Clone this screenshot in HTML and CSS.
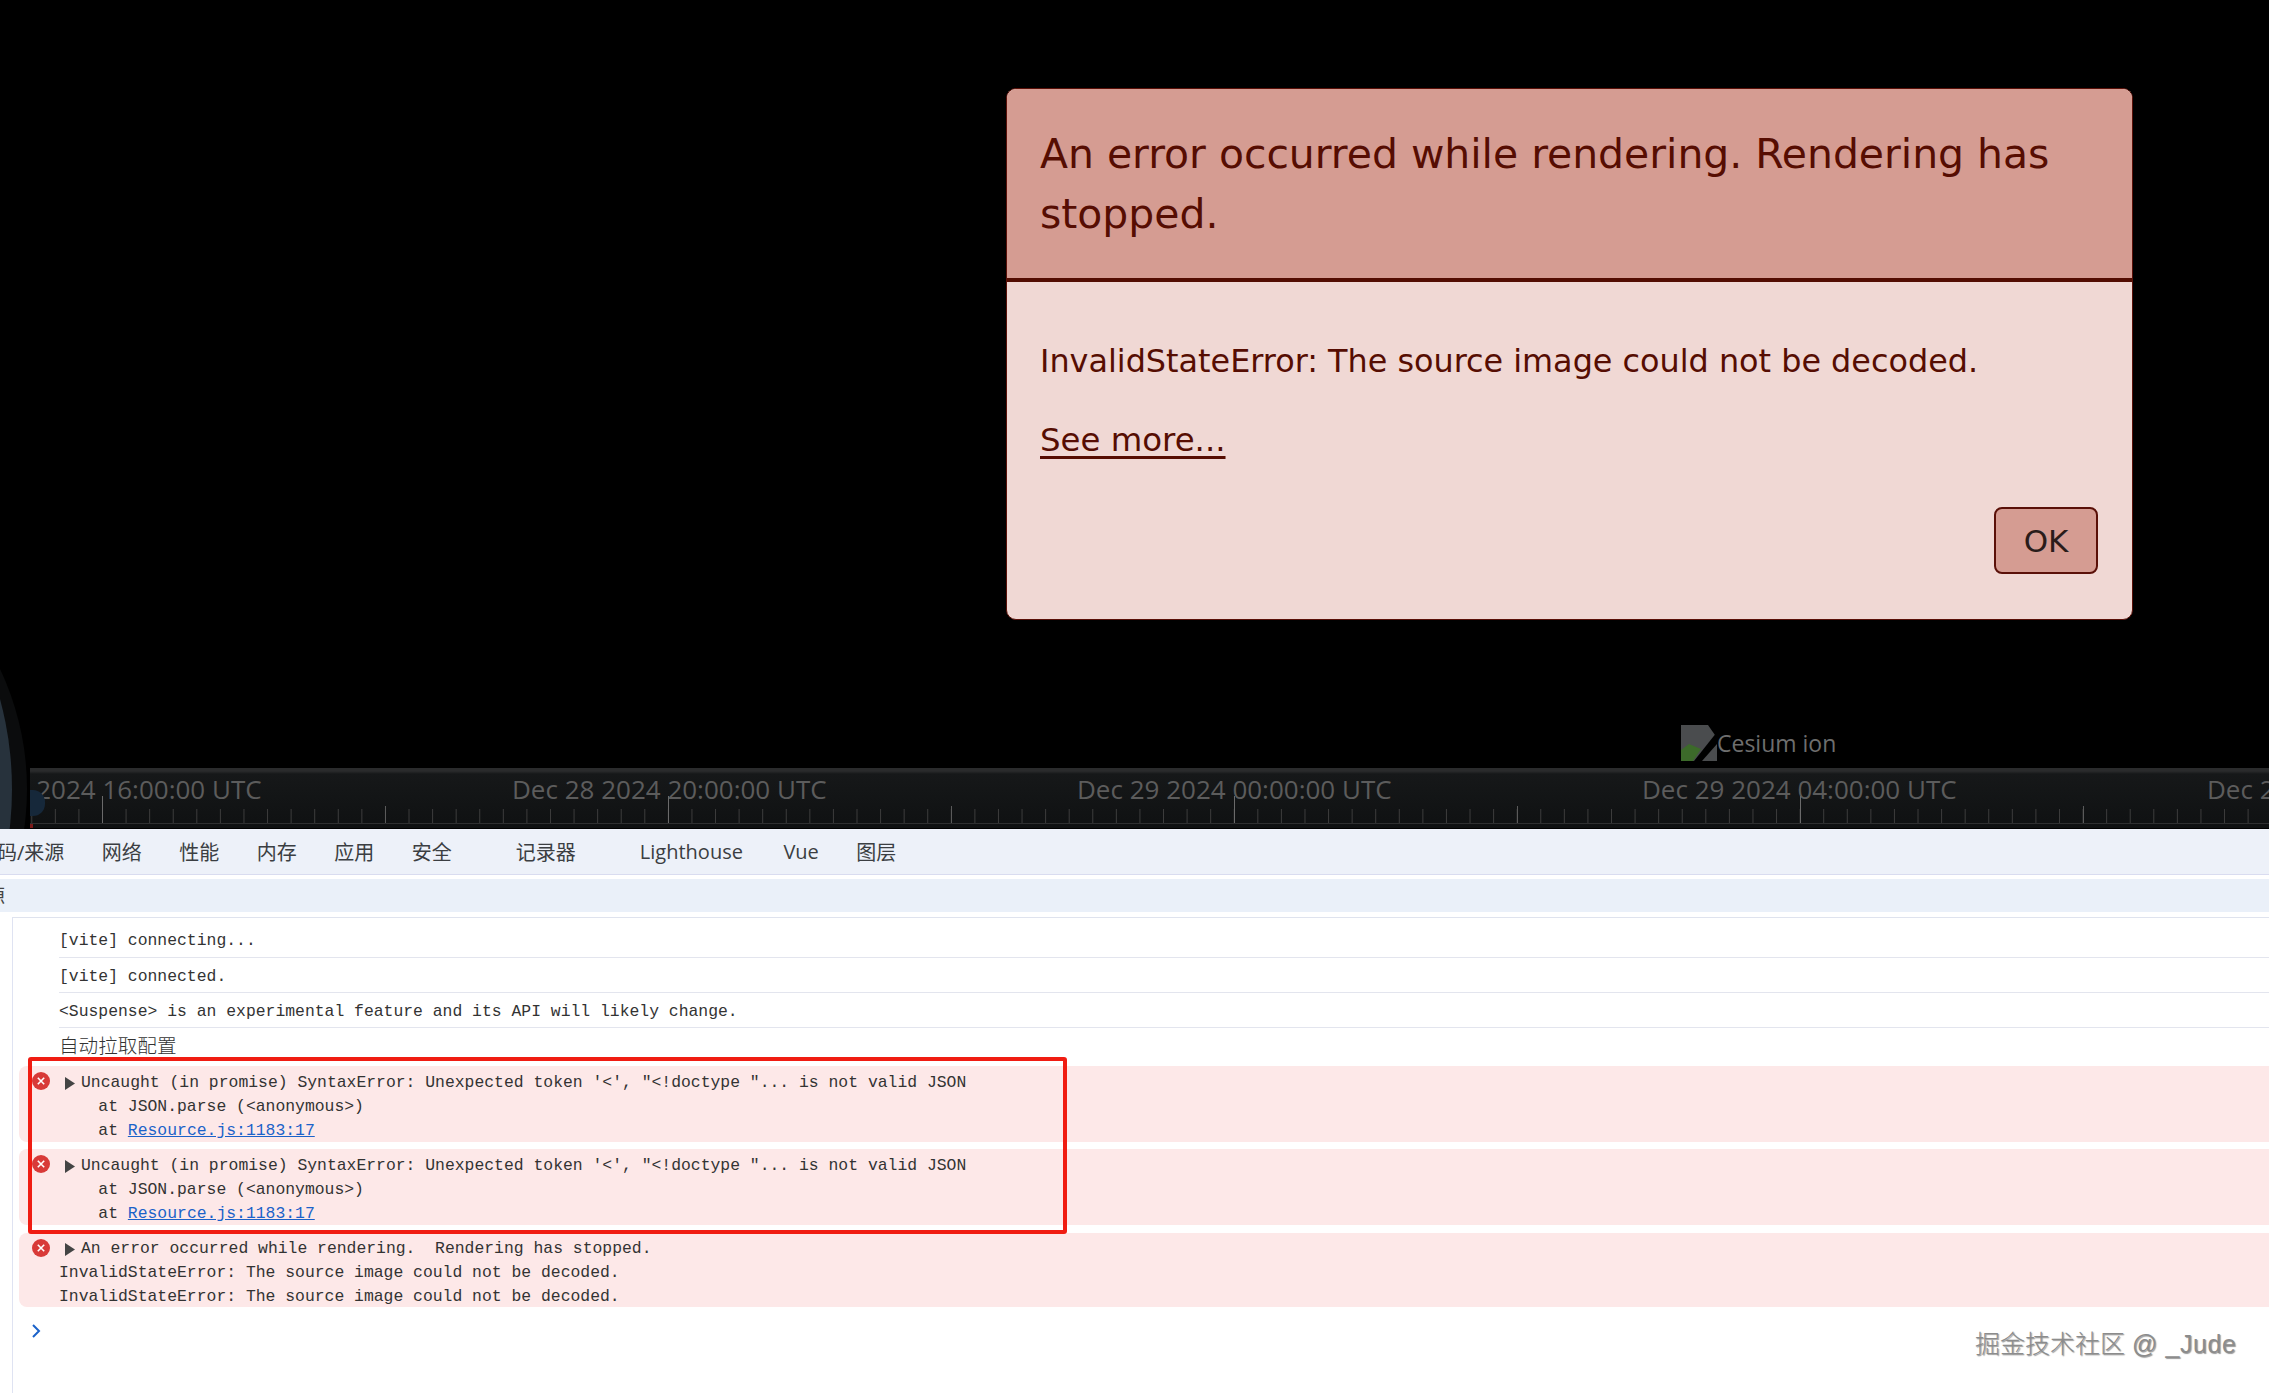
FILE: index.html
```html
<!DOCTYPE html>
<html lang="en">
<head>
<meta charset="utf-8">
<title>Cesium rendering error</title>
<link rel="stylesheet" href="styles.css">
</head>
<body>
<div class="app">
  <section class="viewer">
    <svg class="dial" width="40" height="170" viewBox="0 0 40 170">
      <circle cx="-253" cy="130" r="280" fill="#0b0c0d"/>
      <circle cx="-331" cy="130" r="343" fill="#27323c"/>
    </svg>
    <div class="dialog">
      <div class="dialog-title">An error occurred while rendering. Rendering has stopped.</div>
      <div class="dialog-body">
        <p class="dialog-msg">InvalidStateError: The source image could not be decoded.</p>
        <a class="dialog-more">See more...</a>
        <div class="dialog-actions"><button class="dialog-ok">OK</button></div>
      </div>
    </div>
    <div class="credit">
      <svg class="broken" width="36" height="36" viewBox="0 0 36 36">
        <path d="M0 0H27L36 13V36H0Z" fill="#4a4c4e"/>
        <path d="M0 36V25L8 19L20 24L12 36Z" fill="#3c6a2a"/>
        <path d="M13 36L36 7V19L21 36Z" fill="#000"/>
      </svg>
      <span>Cesium ion</span>
    </div>
    <div class="timeline">
      <div class="time-labels">
        <span class="time-label">Dec 28 2024 16:00:00 UTC</span>
        <span class="time-label">Dec 28 2024 20:00:00 UTC</span>
        <span class="time-label">Dec 29 2024 00:00:00 UTC</span>
        <span class="time-label">Dec 29 2024 04:00:00 UTC</span>
        <span class="time-label">Dec 29 2024 08:00:00 UTC</span>
      </div>
      <div class="ticks"></div>
      <div class="needle"></div>
      <div class="needle-foot"></div>
    </div>
  </section>

  <section class="devtools">
    <nav class="tabs">
      <span class="tab tab-first">码/来源</span>
      <span class="tab">网络</span>
      <span class="tab">性能</span>
      <span class="tab">内存</span>
      <span class="tab">应用</span>
      <span class="tab">安全</span>
      <span class="tab tab-wide">记录器</span>
      <span class="tab tab-wide">Lighthouse</span>
      <span class="tab tab-vue">Vue</span>
      <span class="tab">图层</span>
    </nav>
    <div class="subbar"><span class="subbar-clip">源</span></div>
    <div class="console">
      <div class="log log-first">[vite] connecting...</div>
      <div class="log">[vite] connected.</div>
      <div class="log">&lt;Suspense&gt; is an experimental feature and its API will likely change.</div>
      <div class="log log-last"><span class="cjk">自动拉取配置</span></div>

      <div class="error">
        <svg class="err-icon" width="18" height="18" viewBox="0 0 18 18"><circle cx="9" cy="9" r="9" fill="#d83a38"/><path d="M5.8 5.8L12.2 12.2M12.2 5.8L5.8 12.2" stroke="#fff" stroke-width="1.6"/></svg>
        <div class="err-head"><svg class="caret" width="10" height="13" viewBox="0 0 10 13"><path d="M0 0L10 6.5L0 13Z" fill="#444"/></svg>Uncaught (in promise) SyntaxError: Unexpected token '&lt;', "&lt;!doctype "... is not valid JSON</div>
        <div class="err-line">    at JSON.parse (&lt;anonymous&gt;)</div>
        <div class="err-line">    at <a class="src">Resource.js:1183:17</a></div>
      </div>
      <div class="error">
        <svg class="err-icon" width="18" height="18" viewBox="0 0 18 18"><circle cx="9" cy="9" r="9" fill="#d83a38"/><path d="M5.8 5.8L12.2 12.2M12.2 5.8L5.8 12.2" stroke="#fff" stroke-width="1.6"/></svg>
        <div class="err-head"><svg class="caret" width="10" height="13" viewBox="0 0 10 13"><path d="M0 0L10 6.5L0 13Z" fill="#444"/></svg>Uncaught (in promise) SyntaxError: Unexpected token '&lt;', "&lt;!doctype "... is not valid JSON</div>
        <div class="err-line">    at JSON.parse (&lt;anonymous&gt;)</div>
        <div class="err-line">    at <a class="src">Resource.js:1183:17</a></div>
      </div>
      <div class="error error-last">
        <svg class="err-icon" width="18" height="18" viewBox="0 0 18 18"><circle cx="9" cy="9" r="9" fill="#d83a38"/><path d="M5.8 5.8L12.2 12.2M12.2 5.8L5.8 12.2" stroke="#fff" stroke-width="1.6"/></svg>
        <div class="err-head"><svg class="caret" width="10" height="13" viewBox="0 0 10 13"><path d="M0 0L10 6.5L0 13Z" fill="#444"/></svg>An error occurred while rendering.  Rendering has stopped.</div>
        <div class="err-line">InvalidStateError: The source image could not be decoded.</div>
        <div class="err-line">InvalidStateError: The source image could not be decoded.</div>
      </div>
      <svg class="prompt" width="10" height="16" viewBox="0 0 10 16"><path d="M2 2L8 8L2 14" fill="none" stroke="#1b62c9" stroke-width="2"/></svg>
    </div>
    <div class="highlight"></div>
    <div class="watermark">掘金技术社区 <span class="watermark-name">@ _Jude</span></div>
  </section>
</div>
</body>
</html>
```
FILE: styles.css
```css
* { box-sizing: border-box; }
html, body { margin: 0; padding: 0; }
body { width: 2269px; height: 1393px; overflow: hidden; background: #fff; }
.app { display: flex; flex-direction: column; height: 1393px; }

/* Cesium viewer */
.viewer { position: relative; height: 829px; background: #000; display: flex; flex-direction: column; justify-content: flex-end; overflow: hidden; }
.dial { position: absolute; left: 0; top: 659px; }
.dialog { position: absolute; left: 1006px; top: 88px; width: 1127px; height: 532px; background: #f0d8d4; border: 1px solid #5a1008; border-radius: 10px; overflow: hidden; color: #560d02; font-family: "DejaVu Sans", sans-serif; }
.dialog-title { height: 193px; padding: 36px 33px 0; background: #d59c92; border-bottom: 4px solid #530d02; font-size: 40.9px; line-height: 59.6px; }
.dialog-body { padding: 59px 33px 0; font-size: 31.85px; }
.dialog-msg { margin: 0 0 39px; line-height: 40px; }
.dialog-more { display: block; width: fit-content; font-size: 32.4px; line-height: 40px; text-decoration: underline; text-underline-offset: 5px; }
.dialog-actions { display: flex; justify-content: flex-end; margin-top: 47px; }
.dialog-ok { width: 104px; height: 67px; margin-right: 1px; padding: 0; background: #d59c92; border: 2px solid #5a1008; border-radius: 8px; color: #2a1c1a; font-family: "DejaVu Sans", sans-serif; font-size: 31px; }
.credit { position: absolute; left: 1681px; top: 725px; display: flex; align-items: center; color: #6e6e6e; font-family: "Open Sans", sans-serif; font-size: 23px; line-height: 36px; }
.broken { display: block; }

/* Timeline */
.timeline { position: relative; height: 60px; margin-left: 30px; margin-bottom: 1px; background: linear-gradient(#2a2b2c 0, #2a2b2c 3px, #161819 6px, #0f1112 100%); overflow: hidden; }
.time-labels { display: flex; margin-left: -83px; padding-top: 3px; }
.time-label { flex: 0 0 565px; color: #5c5c5c; font-family: "Open Sans", sans-serif; font-size: 26px; line-height: 36px; white-space: nowrap; }
.ticks { position: absolute; left: 0; right: 0; bottom: 4px; height: 28px; border-bottom: 1px solid #2f3031;
  background-image:
    linear-gradient(90deg, #6a6a6a 1px, transparent 1px),
    linear-gradient(90deg, #5a5a5a 1px, transparent 1px),
    linear-gradient(90deg, #3c3c3c 1px, transparent 1px);
  background-repeat: repeat-x;
  background-size: 566px 27px, 283px 17px, 23.58px 14px;
  background-position: 72px 100%, 72px 100%, 72px 100%;
}
.needle { position: absolute; left: 0; top: 22px; width: 15px; height: 26px; border-radius: 0 12px 12px 0; background: #16283a; }
.needle-foot { position: absolute; left: 0; bottom: 0; width: 3px; height: 4px; background: #7a1a1a; }

/* DevTools */
.devtools { position: relative; flex: 1; min-height: 0; background: #fff; display: flex; flex-direction: column; overflow: hidden; }
.tabs { display: flex; align-items: center; gap: 37.5px; height: 46px; background: #edf1f9; border-bottom: 1px solid #d9dcf0; color: #3b3e42; font-family: "Open Sans", "Noto Sans CJK SC", sans-serif; font-size: 20px; white-space: nowrap; }
.tab-first { margin-left: -3px; }
.tab-wide { margin-left: 26.5px; }
.tab-vue { margin-left: 3px; }
.subbar { height: 33px; margin-top: 4px; background: #eaf0f9; color: #444; font-family: "Noto Sans CJK SC", sans-serif; font-size: 20px; line-height: 33px; overflow: hidden; }
.subbar-clip { display: block; margin-left: -15px; }
.console { position: relative; flex: 1; min-height: 0; margin-top: 5px; margin-left: 12px; border-top: 1px solid #dfe3ee; border-left: 1px solid #dfe3f2; color: #333; font-family: "Liberation Mono", "Noto Sans CJK SC", monospace; font-size: 16.4px; }
.log { display: flex; align-items: center; height: 35px; margin-left: 46px; padding-top: 2px; border-bottom: 1px solid #e3e5ee; white-space: pre; }
.log-first { height: 40px; padding-top: 6px; }
.log-last { height: 38px; border-bottom: 0; padding-top: 0; padding-bottom: 6px; }
.cjk { font-size: 19.6px; font-family: "Noto Sans CJK SC", sans-serif; font-weight: 300; }
.error { position: relative; height: 76px; margin: 0 0 7px 6px; padding: 5px 0 0 40px; background: #fde8e8; border-radius: 8px 0 0 8px; line-height: 24px; }
.err-head, .err-line { white-space: pre; }
.error-last { height: 74px; margin-top: 8px; padding-top: 4px; }
.err-icon { position: absolute; left: 13px; top: 6px; }
.err-head { position: relative; padding-left: 22px; }
.caret { position: absolute; left: 6px; top: 6px; }
.src { color: #1b62c9; text-decoration: underline; }
.prompt { display: block; margin: 16px 0 0 18px; }
.highlight { position: absolute; left: 28px; top: 228px; width: 1039px; height: 177px; border: 4px solid #f01c12; border-radius: 3px; }
.watermark { position: absolute; left: 1975px; top: 498px; color: #8c8c8c; font-family: "Liberation Sans", "Noto Sans CJK SC", sans-serif; font-size: 25px; font-weight: 300; line-height: 34px; white-space: nowrap; text-shadow: 1px 1px 1px #999; }
.watermark-name { letter-spacing: 0.6px; }
```
